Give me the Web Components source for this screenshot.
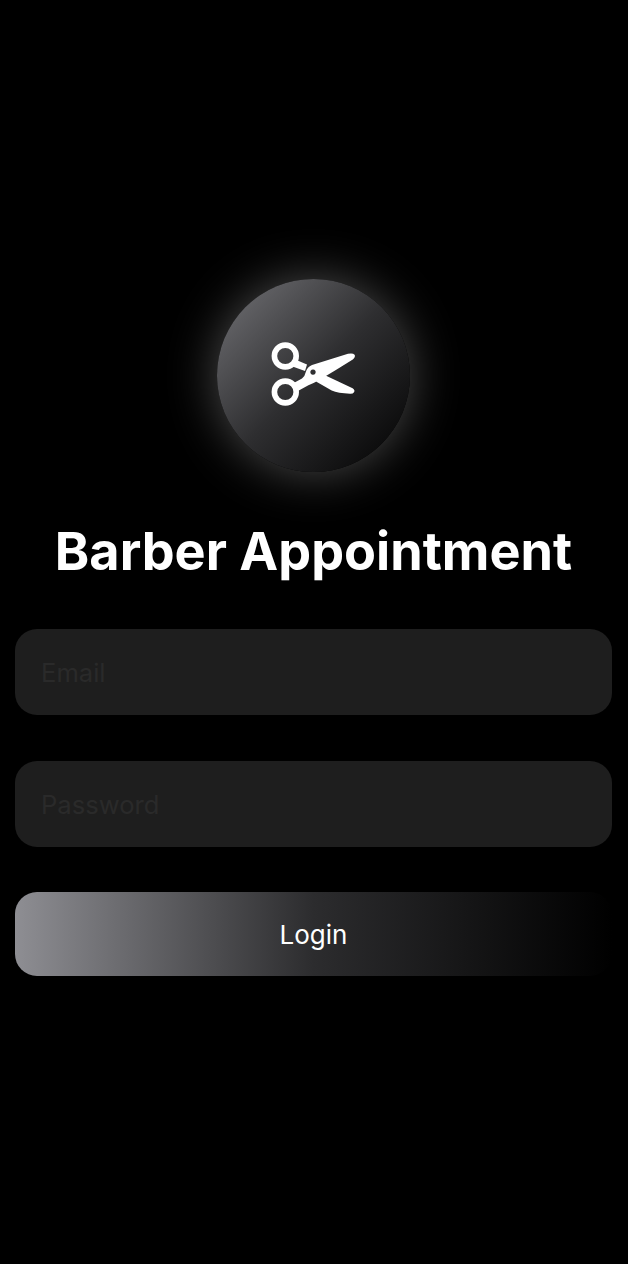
<!DOCTYPE html>
<html lang="en">
<head>
<meta charset="utf-8">
<title>Barber Appointment</title>
<style>
html,body{margin:0;padding:0;background:#000;}
body{font-family:Inter,"Liberation Sans",sans-serif;}
</style>
</head>
<body>
<login-screen>
  <logo-badge></logo-badge>
  <app-title>Barber Appointment</app-title>
  <text-field>Email</text-field>
  <text-field>Password</text-field>
  <gradient-button>Login</gradient-button>
</login-screen>
<script>
function def(name, html){
  customElements.define(name, class extends HTMLElement{
    constructor(){super();this.attachShadow({mode:'open'}).innerHTML=html;}
  });
}
def('login-screen',`<style>
:host{display:flex;flex-direction:column;align-items:stretch;box-sizing:border-box;width:628px;height:1264px;padding:279px 16px 0 15px;background:#000;overflow:hidden;}
</style><slot></slot>`);
def('logo-badge',`<style>
:host{width:193px;height:193px;margin:0 auto;border-radius:50%;background:linear-gradient(135deg,#747478 0%,#2e2e30 50%,#000 100%);box-shadow:0 0 50px rgba(255,255,255,.3);display:flex;align-items:center;justify-content:center;}
svg{width:105px;height:85px;display:block;}
</style>
<svg viewBox="1 3 105 85" aria-hidden="true">
  <g fill="none" stroke="#fff" stroke-width="5.6">
    <circle cx="25.3" cy="26" r="10.9"/>
    <circle cx="25.3" cy="62" r="10.9"/>
  </g>
  <path fill="#fff" d="M34 29 L47 34.6 L45 41 L32.5 36.4 Z"/>
  <path fill="#fff" d="M56 51.6 L64.5 45 L92.6 58.2 Q95.4 60 94 62.2 Q93 64 90 63.8 Q78 63.4 71.7 60.6 Z"/>
  <path fill="#fff" fill-rule="evenodd" d="M34.6 52.4 L42 48.4 Q45 46.4 45.6 42.6 Q47.2 36.8 52 35 L88 23.8 Q92.8 22.6 94.6 24.8 Q95.8 27 92.8 29.4 Q76 40 58.4 50.4 Q53 53.4 48.4 55.2 L37 61.6 Z M53 39.4 a2.7 2.7 0 1 0 .01 0 Z"/>
</svg>`);
def('app-title',`<style>
:host{display:block;margin-top:49px;margin-bottom:48px;text-align:center;color:#fff;font:700 52.2px/60px Inter,"Liberation Sans",sans-serif;white-space:nowrap;}
</style><slot></slot>`);
def('text-field',`<style>
:host{display:flex;align-items:center;box-sizing:border-box;height:86px;margin-top:46px;padding:2px 26px 0;border-radius:22px;background:#1e1e1e;color:#2a2a2a;font:400 25.6px/34px Inter,"Liberation Sans",sans-serif;}
:host(:first-of-type){margin-top:0;}
</style><slot></slot>`);
def('gradient-button',`<style>
:host{display:flex;align-items:center;justify-content:center;box-sizing:border-box;height:84px;margin-top:45px;padding-top:2px;border-radius:22px;background:linear-gradient(90deg,#8e8e93 0%,#2c2c2e 50%,#000 100%);color:#fff;font:400 26px/32px Inter,"Liberation Sans",sans-serif;}
</style><slot></slot>`);
</script>
</body>
</html>
